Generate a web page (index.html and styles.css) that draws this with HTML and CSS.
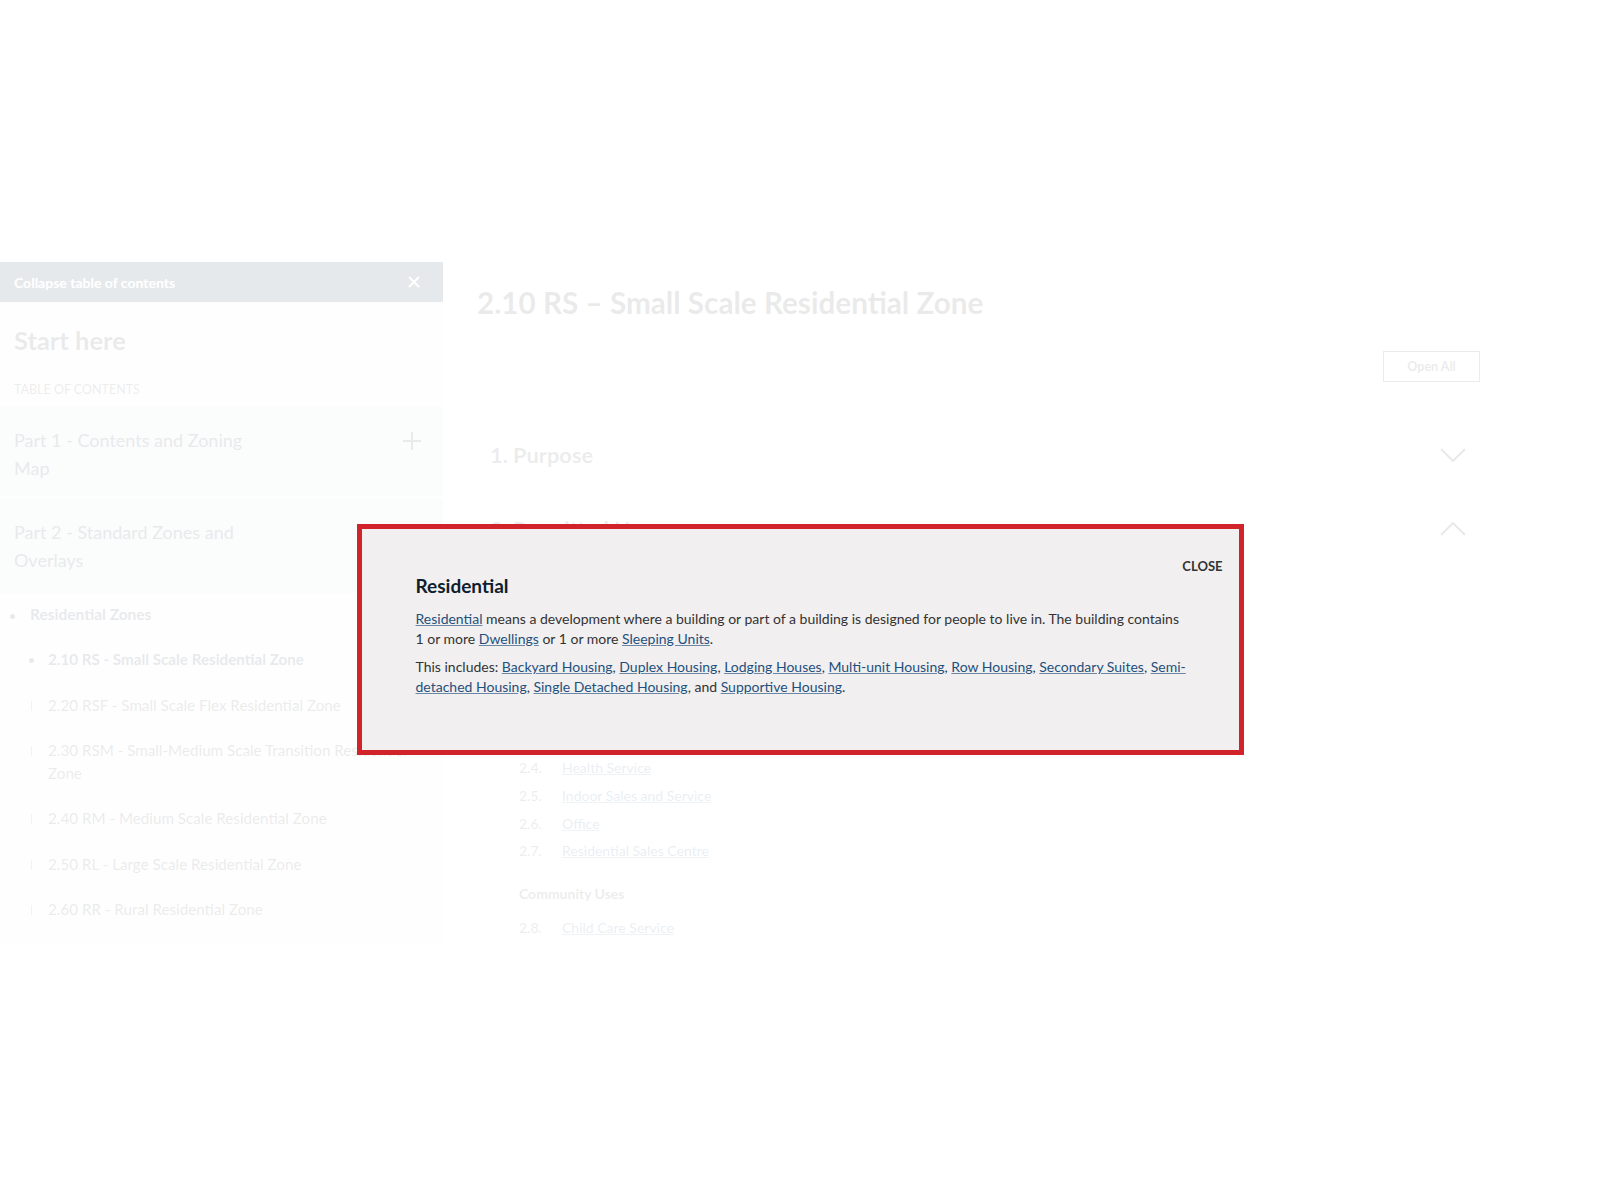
FILE: index.html
```html
<!DOCTYPE html>
<html lang="en">
<head>
  <meta charset="UTF-8">
  <title>2.10 RS – Small Scale Residential Zone</title>
  <link rel="stylesheet" href="styles.css">
</head>
<body>
  <div class="page">
    <aside class="sidebar">
      <div class="toc-bar">
        <span>Collapse table of contents</span>
        <svg class="toc-x" width="14" height="14" viewBox="0 0 14 14">
          <path d="M2 2L12 12M12 2L2 12" stroke="#fff" stroke-width="2" fill="none"/>
        </svg>
      </div>
      <h2 class="start">Start here</h2>
      <div class="toc-label">TABLE OF CONTENTS</div>

      <div class="toc-part">
        <span class="toc-part-title">Part 1 - Contents and Zoning Map</span>
        <svg class="toc-plus" width="20" height="20" viewBox="0 0 20 20">
          <path d="M10 1V19M1 10H19" stroke="#1d2a38" stroke-width="2" fill="none"/>
        </svg>
      </div>
      <div class="toc-part open">
        <span class="toc-part-title">Part 2 - Standard Zones and Overlays</span>
      </div>

      <ul class="toc-list">
        <li>
          <div class="toc-group">Residential Zones</div>
          <ul class="toc-sub">
            <li class="current">2.10 RS - Small Scale Residential Zone</li>
            <li>2.20 RSF - Small Scale Flex Residential Zone</li>
            <li>2.30 RSM - Small-Medium Scale Transition Residential Zone</li>
            <li>2.40 RM - Medium Scale Residential Zone</li>
            <li>2.50 RL - Large Scale Residential Zone</li>
            <li>2.60 RR - Rural Residential Zone</li>
          </ul>
        </li>
      </ul>
    </aside>

    <main class="content">
      <h1 class="zone-title">2.10 RS – Small Scale Residential Zone</h1>
      <div class="actions">
        <button class="open-all">Open All</button>
      </div>

      <section class="acc">
        <div class="acc-head">
          <span>1. Purpose</span>
          <svg width="26" height="14" viewBox="0 0 26 14">
            <path d="M1 1L13 13L25 1" stroke="#222" stroke-width="2" fill="none"/>
          </svg>
        </div>
      </section>

      <section class="acc">
        <div class="acc-head">
          <span>2. Permitted Uses</span>
          <svg width="26" height="14" viewBox="0 0 26 14">
            <path d="M1 13L13 1L25 13" stroke="#222" stroke-width="2" fill="none"/>
          </svg>
        </div>
        <div class="acc-body">
          <div class="use-group">Residential Uses</div>
          <ol class="uses">
            <li><span class="num">2.1.</span><a href="#">Residential</a></li>
          </ol>
          <div class="use-group">Commercial Uses</div>
          <ol class="uses">
            <li><span class="num">2.2.</span><a href="#">Home Based Business</a></li>
            <li><span class="num">2.3.</span><a href="#">Food and Drink Service</a></li>
            <li><span class="num">2.4.</span><a href="#">Health Service</a></li>
            <li><span class="num">2.5.</span><a href="#">Indoor Sales and Service</a></li>
            <li><span class="num">2.6.</span><a href="#">Office</a></li>
            <li><span class="num">2.7.</span><a href="#">Residential Sales Centre</a></li>
          </ol>
          <div class="use-group">Community Uses</div>
          <ol class="uses">
            <li><span class="num">2.8.</span><a href="#">Child Care Service</a></li>
          </ol>
        </div>
      </section>
    </main>
  </div>

  <div class="backdrop">
    <div class="modal" role="dialog">
      <div class="modal-head">
        <h3>Residential</h3>
        <button class="modal-close">CLOSE</button>
      </div>
      <div class="modal-body">
        <p><a href="#">Residential</a> means a development where a building or part of a building is designed for people to live in. The building contains 1 or more <a href="#">Dwellings</a> or 1 or more <a href="#">Sleeping Units</a>.</p>
        <p>This includes: <a href="#">Backyard Housing</a>, <a href="#">Duplex Housing</a>, <a href="#">Lodging Houses</a>, <a href="#">Multi-unit Housing</a>, <a href="#">Row Housing</a>, <a href="#">Secondary Suites</a>, <a href="#">Semi-detached Housing</a>, <a href="#">Single Detached Housing</a>, and <a href="#">Supportive Housing</a>.</p>
      </div>
    </div>
  </div>
</body>
</html>
```

FILE: styles.css
```css
* {
  box-sizing: border-box;
}

body {
  margin: 0;
  font-family: Lato, "Open Sans", sans-serif;
  color: #333;
  background: #fff;
}

a {
  color: #1f4f7c;
  text-decoration-color: #6a88a6;
}

/* page under the dialog */
.page {
  display: flex;
  padding-top: 262px;
}

.sidebar {
  width: 443px;
  flex-shrink: 0;
  background: #f4f6f8;
  padding-bottom: 12px;
}

.toc-bar {
  height: 40px;
  background: #00223f;
  color: #fff;
  font-size: 14px;
  font-weight: 700;
  display: flex;
  align-items: center;
  justify-content: space-between;
  padding: 0 22px 0 14px;
}

.start {
  margin: 23px 0 0;
  padding: 0 14px;
  font-size: 25.5px;
  line-height: 30px;
  font-weight: 700;
  color: #2d2d2d;
}

.toc-label {
  margin-top: 27px;
  padding: 0 14px;
  font-size: 12.5px;
  line-height: 16px;
  color: #444;
}

.toc-part {
  margin-top: 9px;
  background: #d5d9de;
  padding: 19px 21px 14px 14px;
  display: flex;
  justify-content: space-between;
  align-items: flex-start;
  color: #0a2540;
}

.toc-part + .toc-part {
  margin-top: 3px;
}

.toc-part.open {
  padding-bottom: 19px;
}

.toc-part-title {
  width: 250px;
  font-size: 18px;
  line-height: 28px;
}

.toc-plus {
  margin-top: 5px;
}

.toc-list,
.toc-sub {
  list-style: none;
  margin: 0;
  padding: 0;
}

.toc-list {
  font-size: 15.2px;
  line-height: 23.3px;
}

.toc-group {
  position: relative;
  padding: 10px 0 11px 30px;
  font-size: 15.5px;
  font-weight: 700;
  color: #0a2540;
}

.toc-group::before {
  content: "";
  position: absolute;
  left: 10px;
  top: 21px;
  width: 5px;
  height: 5px;
  border-radius: 50%;
  background: #0a2540;
}

.toc-sub li {
  position: relative;
  padding: 11px 8px 11px 48px;
  color: #333;
}

.toc-sub li::before {
  content: "";
  position: absolute;
  left: 31px;
  top: 18px;
  width: 1px;
  height: 10px;
  background: #777;
}

.toc-sub li.current {
  font-weight: 700;
  color: #0a2540;
}

.toc-sub li.current::before {
  left: 29px;
  top: 21px;
  width: 5px;
  height: 5px;
  border-radius: 50%;
  background: #0a2540;
}

.content {
  width: 1003px;
  margin-left: 34px;
  padding-top: 23px;
}

.zone-title {
  margin: 0;
  font-size: 29.7px;
  line-height: 35px;
  font-weight: 700;
  color: #2d2d2d;
}

.actions {
  display: flex;
  justify-content: flex-end;
  margin-top: 31px;
}

.open-all {
  width: 97px;
  height: 31px;
  background: #fff;
  border: 1px solid #2a3b4c;
  font-family: inherit;
  font-size: 12.5px;
  font-weight: 700;
  color: #333;
}

.actions + .acc {
  margin-top: 36px;
}

.acc-head {
  display: flex;
  justify-content: space-between;
  align-items: center;
  padding: 23px 14px 23px 13px;
  font-size: 21.8px;
  line-height: 28px;
  font-weight: 700;
  color: #444;
}

.acc-body {
  padding: 26px 0 0 42px;
  font-size: 14px;
}

.use-group {
  font-weight: 700;
  line-height: 20px;
  margin: 19px 0 10px;
  color: #444;
}

.use-group:first-child {
  margin-top: 0;
}

.uses {
  list-style: none;
  margin: 0;
  padding: 0;
}

.uses li {
  display: flex;
  line-height: 27.7px;
}

.uses .num {
  width: 43px;
  color: #444;
}

/* white wash behind the dialog */
.backdrop {
  position: fixed;
  inset: 0;
  background: rgba(255, 255, 255, 0.9);
  display: flex;
  justify-content: center;
  align-items: flex-start;
  padding-top: 524px;
}

.modal {
  width: 887px;
  background: #f1eff0;
  border: 5px solid #d1232a;
  padding: 28px 16px 54px 54px;
}

.modal-head {
  display: flex;
  justify-content: space-between;
  align-items: flex-start;
}

.modal-head h3 {
  margin: 17px 0 0;
  font-size: 19px;
  line-height: 23px;
  font-weight: 700;
  color: #0f1d2d;
}

.modal-close {
  background: none;
  border: none;
  padding: 0;
  font-family: inherit;
  font-size: 13px;
  line-height: 18px;
  font-weight: 700;
  color: #333;
}

.modal-body {
  padding-right: 34px;
  margin-top: 12px;
  font-size: 14px;
  line-height: 19.5px;
  color: #333;
}

.modal-body p {
  margin: 0 0 9px;
}

.modal-body p:last-child {
  margin-bottom: 0;
}
```
